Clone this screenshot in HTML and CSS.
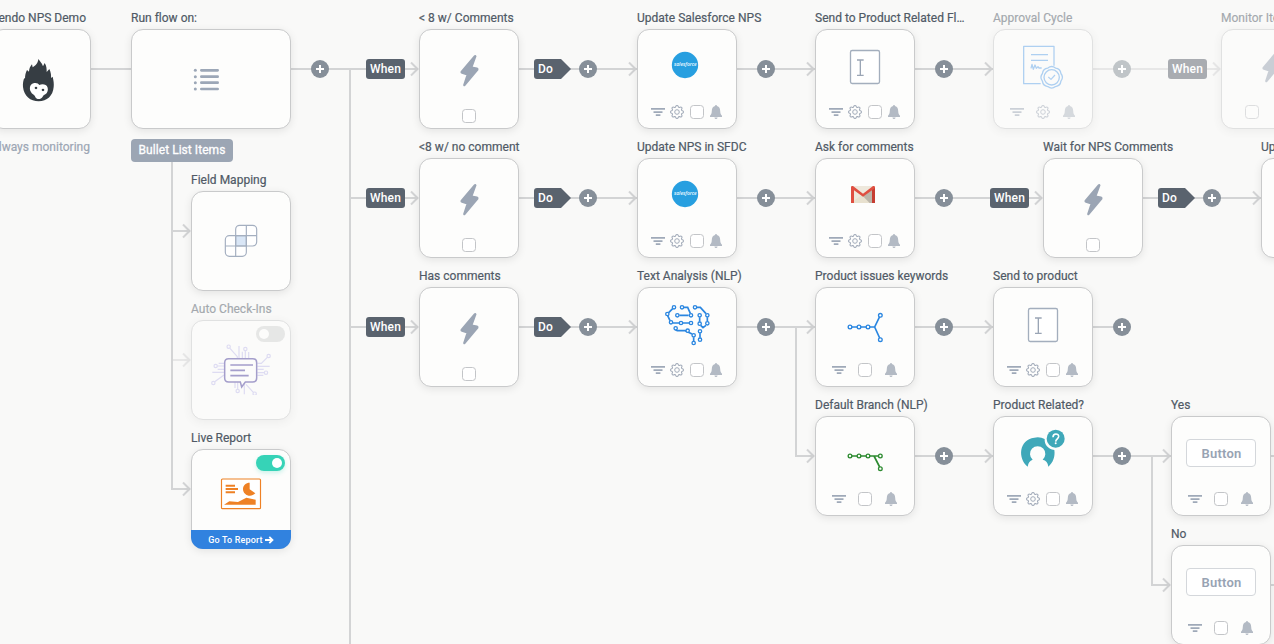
FILE: index.html
```html
<!DOCTYPE html>
<html lang="en">
<head>
<meta charset="utf-8">
<title>NPS flow</title>
<link rel="stylesheet" href="styles.css">
</head>
<body>
<svg class="defs" aria-hidden="true">
  <symbol id="filter" viewBox="0 0 14 14"><path d="M0 3.900h14M2.500 7.100h9M4.800 10.100h4.600" fill="none" stroke="#9fa9b8" stroke-width="1.600"/></symbol>
  <symbol id="gear" viewBox="0 0 14 14"><g fill="none" stroke="#a3acba"><path d="M5.700 1.600Q5.900.5 7 .5t1.300 1.100q.2 1 1.200.9 1.300-.9 2.100-.1t-.1 2.100q-.1 1 .9 1.200Q13.500 5.900 13.500 7t-1.100 1.300q-1 .2-.9 1.200.9 1.300.1 2.100t-2.100-.1q-1-.1-1.200.9Q8.100 13.500 7 13.500t-1.300-1.100q-.2-1-1.200-.9-1.300.9-2.100.1t.1-2.100q.1-1-.9-1.200Q.5 8.100.5 7t1.100-1.300q1-.2.9-1.200-.9-1.300-.1-2.100t2.100.1q1 .1 1.200-.9z" stroke-width="1.050"/><circle cx="7" cy="7" r="2.300"/></g></symbol>
  <symbol id="bell" viewBox="0 0 12 14"><path d="M5 1.100Q5 0 6 0t1 1.100C9.400 1.600 10.100 3.500 10.200 6c.1 2.300.5 3.400 1.800 4.700V12H0v-1.300C1.300 9.400 1.700 8.300 1.800 6 1.900 3.500 2.600 1.600 5 1.100zM4.400 12.500h3.200Q7.300 14 6 14t-1.600-1.500z" fill="#b3bac4"/></symbol>
  <symbol id="bolt" viewBox="240 90 294 222"><path d="M404 168 364 215q-1 3 2 4l16 5-10 31q0 2 2 1l39-47q1-3-2-4l-16-3 12-33q-1-3-3-1z" fill="#9ba5b4" stroke="#9ba5b4" stroke-width="5" stroke-linejoin="round"/></symbol>
  <symbol id="field" viewBox="618 90 294 222"><rect x="721.500" y="151.500" width="87" height="99" rx="5" fill="#fff" stroke="#a3aebd" stroke-width="4"/><path d="M741 180h20M741 226h20M751 180v46" fill="none" stroke="#9aa5b5" stroke-width="4"/></symbol>
</svg>

<main class="canvas">
  <svg class="wires" viewBox="0 0 1274 644">
    <path d="M90 69h41M291 69h75M350 69v575M350 198h16M350 327h16M172 161v328h18M172 231h18M405 69h13M405 198h13M405 327h13M519 69h118M519 198h118M519 327h118M737 69h78M737 198h78M737 327h78M915 69h78M915 198h75M1029 198h13M1143 198h118M915 327h78M1093 327h20M796 327v129h18M915 456h78M1093 456h78M1152 456v129h18M1271 456h3M1271 585h3"/>
    <path class="faded" d="M173 360h17M1093 69h75M1207 69h13"/>
    <g>
      <path d="M411 62.500l6.500 6.500-6.500 6.500M411 191.500l6.500 6.500-6.500 6.500M411 320.500l6.500 6.500-6.500 6.500M629 62.500l6.500 6.500-6.500 6.500M629 191.500l6.500 6.500-6.500 6.500M629 320.500l6.500 6.500-6.500 6.500M807 62.500l6.500 6.500-6.500 6.500M807 191.500l6.500 6.500-6.500 6.500M807 320.500l6.500 6.500-6.500 6.500M807 449.500l6.500 6.500-6.500 6.500M985 62.500l6.500 6.500-6.500 6.500M985 320.500l6.500 6.500-6.500 6.500M985 449.500l6.500 6.500-6.500 6.500M1035 191.500l6.500 6.500-6.500 6.500M1253 191.500l6.500 6.500-6.500 6.500M1163 449.500l6.500 6.500-6.500 6.500M1163 578.500l6.500 6.500-6.500 6.500M183 224.500l6.500 6.500-6.500 6.500M183 482.500l6.500 6.500-6.500 6.500"/>
      <path class="faded" d="M183 353.500l6.500 6.500-6.500 6.500M1213 62.500l6.500 6.500-6.500 6.500"/>
    </g>
  </svg>

  <section class="node start r1"><h2 class="right">Pendo NPS Demo</h2><div class="card">
    <svg class="art" viewBox="-24 90 294 222"><path d="M115 177c4 6 11 12 14 22l5-10c6 8 6 20 6 27l8-9c5 11 6 20 5 27l5-4c3 12 4 22 3 31-2 26-20 43-45 43s-44-16-47-43c-1-11 1-20 4-28l2 4c0-12 2-19 6-27l6 5c0-8 3-15 9-22l2 9c9-6 16-12 17-25z" fill="#363d43"/><path d="M93 276c-6-9-4-25 10-27 8-1 12 2 15 6 8-4 22-3 25 8 2 8-1 16-7 20-4 2-6 3-8 7-5 9-18 10-22 1-2-6-5-6-8-9q-3-2-5-6z" fill="#fff"/><ellipse cx="108" cy="264" rx="4" ry="3.500" fill="#363d43"/><ellipse cx="129" cy="270" rx="4" ry="3.500" fill="#363d43"/></svg>
  </div><p class="caption">Always monitoring</p></section>

  <section class="node run r1"><h2>Run flow on:</h2><div class="card">
    <svg class="art" viewBox="396 90 474 222"><path d="M604 211h49M604 230h49M604 248h49M604 267h49" stroke="#9ca7b7" stroke-width="8" stroke-linecap="round"/><g fill="#9ca7b7"><circle cx="586" cy="211" r="4.500"/><circle cx="586" cy="230" r="4.500"/><circle cx="586" cy="248" r="4.500"/><circle cx="586" cy="267" r="4.500"/></g></svg>
  </div><p class="chip">Bullet List Items</p></section>

  <section class="node sub s1"><h2>Field Mapping</h2><div class="card">
    <svg class="art" viewBox="216 81 294 222"><g fill="#fff" stroke="#a4afc0" stroke-width="3.500"><rect x="347" y="181" width="63" height="62" rx="12"/><rect x="316" y="212" width="63" height="62" rx="12"/><path d="M347 212h32v31h-32z" fill="#d9e6f6"/><path d="M379 181v62h-63M347 274v-62h63" fill="none"/></g></svg>
  </div></section>

  <section class="node sub s2 dim"><h2>Auto Check-Ins</h2><div class="card"><i class="toggle off"></i>
    <svg class="art" viewBox="216 78 294 222"><g fill="none" stroke="#c4c0ee" stroke-width="3.500"><path d="M330 160l22 25v10M357 153v40M367 170v20M376 167v25M386 171v20M412 205h12l18-18M412 214h37M412 223h19M412 233h22M412 241h18M313 205h-17M313 213h-21M313 223h-20M313 232h-36M312 240l-28 20M345 262v17M353 262v21M373 263v35M378 268l22 24"/><circle cx="326" cy="155" r="5"/><circle cx="376" cy="162" r="5"/><circle cx="446" cy="183" r="5"/><circle cx="287" cy="213" r="5"/><circle cx="438" cy="233" r="5"/><circle cx="280" cy="264" r="5"/><circle cx="353" cy="288" r="5"/><circle cx="404" cy="296" r="5"/></g><path d="M326 191h72q12 0 12 12v46q0 12-12 12h-22l-11 15-4-15h-35q-12 0-12-12v-46q0-12 12-12z" fill="#fff" stroke="#5145a0" stroke-width="4.500"/><path d="M331 210h68M331 226h44M331 242h55" stroke="#5145a0" stroke-width="5"/></svg>
  </div></section>

  <section class="node sub s3"><h2>Live Report</h2><div class="card report"><i class="toggle"></i>
    <svg class="art" viewBox="216 75 294 222"><rect x="304.500" y="162" width="117" height="89" rx="3" fill="#fff" stroke="#ee8125" stroke-width="3.500"/><g fill="#ee8125"><path d="M317 179h28v6h-28zM317 189h37v6h-37zM317 199h28v6h-28zM389 173v20l17 12c-14 15-37 5-37-13 0-11 9-19 20-19zM312 239l16-10 26 2 25-13 28 6v15z"/></g></svg>
    <a class="go">Go To Report <svg viewBox="0 0 9 8"><path d="M0 4h7M4.300.8 7.500 4 4.300 7.200" fill="none" stroke="#fff" stroke-width="1.800"/></svg></a>
  </div></section>

  <section class="node c1 r1"><h2>&lt; 8 w/ Comments</h2><div class="card"><svg class="art"><use href="#bolt"/></svg><footer class="one"><i class="box"></i></footer></div></section>
  <section class="node c1 r2"><h2>&lt;8 w/ no comment</h2><div class="card"><svg class="art"><use href="#bolt"/></svg><footer class="one"><i class="box"></i></footer></div></section>
  <section class="node c1 r3"><h2>Has comments</h2><div class="card"><svg class="art"><use href="#bolt"/></svg><footer class="one"><i class="box"></i></footer></div></section>

  <section class="node c2 r1"><h2>Update Salesforce NPS</h2><div class="card"><svg class="art" viewBox="84 90 294 222"><circle cx="225" cy="195" r="39.500" fill="#279fe0"/><text class="brand" x="192" y="198" textLength="68">salesforce</text></svg><footer><svg><use href="#filter"/></svg><svg><use href="#gear"/></svg><i class="box"></i><svg class="bell"><use href="#bell"/></svg></footer></div></section>
  <section class="node c2 r2"><h2>Update NPS in SFDC</h2><div class="card"><svg class="art" viewBox="84 90 294 222"><circle cx="225" cy="195" r="39.500" fill="#279fe0"/><text class="brand" x="192" y="198" textLength="68">salesforce</text></svg><footer><svg><use href="#filter"/></svg><svg><use href="#gear"/></svg><i class="box"></i><svg class="bell"><use href="#bell"/></svg></footer></div></section>
  <section class="node c2 r3"><h2>Text Analysis (NLP)</h2><div class="card">
    <svg class="art" viewBox="54 69 294 222"><g fill="none" stroke="#2a86e0" stroke-width="5"><path d="M158 131l-12 12M143 152l7 15M159 174h19M188 174h19M178 151h28M192 127h11l8 18M231 127h10l17 19M262 157v12M239 157v13M258 181l-9 7-7-7M167 195l5 2h24l20 10M221 217v11M240 205v13"/></g><g fill="#fff" stroke="#2a86e0" stroke-width="4"><circle cx="162" cy="127" r="5"/><circle cx="142" cy="147" r="5"/><circle cx="153" cy="172" r="5"/><circle cx="183" cy="174" r="5"/><circle cx="213" cy="174" r="5"/><circle cx="172" cy="151" r="5"/><circle cx="213" cy="151" r="5"/><circle cx="186" cy="127" r="5"/><circle cx="225" cy="127" r="5"/><circle cx="262" cy="151" r="5"/><circle cx="262" cy="175" r="5"/><circle cx="239" cy="151" r="5"/><circle cx="239" cy="176" r="5"/><circle cx="167" cy="190" r="5"/><circle cx="203" cy="197" r="5"/><circle cx="221" cy="211" r="5"/><circle cx="221" cy="234" r="5"/><circle cx="240" cy="199" r="5"/><circle cx="240" cy="224" r="5"/></g></svg>
  <footer><svg><use href="#filter"/></svg><svg><use href="#gear"/></svg><i class="box"></i><svg class="bell"><use href="#bell"/></svg></footer></div></section>

  <section class="node c3 r1"><h2>Send to Product Related Fl…</h2><div class="card"><svg class="art"><use href="#field"/></svg><footer><svg><use href="#filter"/></svg><svg><use href="#gear"/></svg><i class="box"></i><svg class="bell"><use href="#bell"/></svg></footer></div></section>
  <section class="node c3 r2"><h2>Ask for comments</h2><div class="card">
    <svg class="art" viewBox="48 72 294 222"><path d="M153 153h72v51h-72z" fill="#eee8dc"/><path d="M153 204l36-27 36 27z" fill="#e8e1cf"/><path d="M189 184l28-22v42h-8z" fill="#bcb6aa"/><path d="M153 157q0-5 6-4l30 23 30-23q6-1 6 4v47h-9v-38l-27 19-27-19v38h-9z" fill="#df4f41"/><path d="M216 166l9-7v45h-9z" fill="#c63d31"/></svg>
  <footer><svg><use href="#filter"/></svg><svg><use href="#gear"/></svg><i class="box"></i><svg class="bell"><use href="#bell"/></svg></footer></div></section>
  <section class="node c3 r3"><h2>Product issues keywords</h2><div class="card">
    <svg class="art" viewBox="588 69 294 222"><path d="M690 186h75M779 155l-15 31 15 33" fill="none" stroke="#2a86e0" stroke-width="5"/><g fill="#fff" stroke="#2a86e0" stroke-width="4"><circle cx="690" cy="186" r="5.500"/><circle cx="717" cy="186" r="5.500"/><circle cx="744" cy="186" r="5.500"/><circle cx="781" cy="151" r="5.500"/><circle cx="781" cy="224" r="5.500"/></g></svg>
  <footer class="wide"><svg><use href="#filter"/></svg><i class="box"></i><svg class="bell"><use href="#bell"/></svg></footer></div></section>
  <section class="node c3 r4"><h2>Default Branch (NLP)</h2><div class="card">
    <svg class="art" viewBox="108 81 294 222"><path d="M210 198h90M282 198l17 33" fill="none" stroke="#2e8b31" stroke-width="5"/><g fill="#fff" stroke="#2e8b31" stroke-width="4"><circle cx="210" cy="198" r="5.500"/><circle cx="237" cy="198" r="5.500"/><circle cx="264" cy="198" r="5.500"/><circle cx="301" cy="198" r="5.500"/><circle cx="301" cy="236" r="5.500"/></g></svg>
  <footer class="wide"><svg><use href="#filter"/></svg><i class="box"></i><svg class="bell"><use href="#bell"/></svg></footer></div></section>

  <section class="node c4 r1 dim"><h2>Approval Cycle</h2><div class="card">
    <svg class="art" viewBox="192 90 294 222"><g fill="none" stroke="#66a9ec" stroke-width="3.800" stroke-linejoin="round"><path d="M332 251h-51V139h91v58M303 164h51M303 181h51M303 205l3-12 4 15 5-13 4 10 5-5 3 4h8"/><path d="M392.700 220.500Q402 232 392.700 243.500 391 258 376.500 259.700 365 269 353.500 259.700 339 258 337.300 243.500 328 232 337.300 220.500 339 206 353.500 204.300 365 195 376.500 204.300 391 206 392.700 220.500z" stroke-width="4"/><circle cx="365" cy="232" r="23" stroke-width="4"/><path d="M355 231l8 7 12-13" stroke-width="3.500"/></g></svg>
  <footer class="wide"><svg><use href="#filter"/></svg><svg><use href="#gear"/></svg><svg class="bell"><use href="#bell"/></svg></footer></div></section>
  <section class="node c4 r3"><h2>Send to product</h2><div class="card"><svg class="art"><use href="#field"/></svg><footer><svg><use href="#filter"/></svg><svg><use href="#gear"/></svg><i class="box"></i><svg class="bell"><use href="#bell"/></svg></footer></div></section>
  <section class="node c4 r4"><h2>Product Related?</h2><div class="card">
    <svg class="art" viewBox="642 81 294 222"><path d="M743 230C713 205 716 150 763 143q18-3 31 4c-1 17 10 30 29 33 3 20-4 38-18 50q-2-18-17-21a23 23 0 1 0-30 0q-13 4-15 21z" fill="#3fa8b9"/><circle cx="827" cy="146" r="27" fill="#3fa8b9"/><path d="M819 142c0-14 18-12 17-2-1 7-8 6-9 15" fill="none" stroke="#fff" stroke-width="4.800"/><circle cx="827" cy="160" r="3" fill="#fff"/></svg>
  <footer><svg><use href="#filter"/></svg><svg><use href="#gear"/></svg><i class="box"></i><svg class="bell"><use href="#bell"/></svg></footer></div></section>

  <section class="node wait r2"><h2>Wait for NPS Comments</h2><div class="card"><svg class="art"><use href="#bolt"/></svg><footer class="one"><i class="box"></i></footer></div></section>
  <section class="node c5 r4"><h2>Yes</h2><div class="card"><span class="button">Button</span><footer class="wide"><svg><use href="#filter"/></svg><i class="box"></i><svg class="bell"><use href="#bell"/></svg></footer></div></section>
  <section class="node c5 r5"><h2>No</h2><div class="card"><span class="button">Button</span><footer class="wide"><svg><use href="#filter"/></svg><i class="box"></i><svg class="bell"><use href="#bell"/></svg></footer></div></section>
  <section class="node monitor r1 dim"><h2>Monitor Item</h2><div class="card"><svg class="art"><use href="#bolt" y="-4"/></svg><footer class="two"><i class="box"></i></footer></div></section>
  <section class="node last r2"><h2>Update</h2><div class="card"></div></section>

  <span class="tag when w1 t1">When</span><span class="tag when w1 t2">When</span><span class="tag when w1 t3">When</span>
  <span class="tag when w2 t2">When</span><span class="tag when w3 t1 pale">When</span>
  <span class="tag do d1 t1">Do</span><span class="tag do d1 t2">Do</span><span class="tag do d1 t3">Do</span><span class="tag do d2 t2">Do</span>

  <i class="plus p0 t1"></i>
  <i class="plus p1 t1"></i><i class="plus p1 t2"></i><i class="plus p1 t3"></i>
  <i class="plus p2 t1"></i><i class="plus p2 t2"></i><i class="plus p2 t3"></i>
  <i class="plus p3 t1"></i><i class="plus p3 t2"></i><i class="plus p3 t3"></i><i class="plus p3 t4"></i>
  <i class="plus p4 t1 pale"></i><i class="plus p4 t3"></i><i class="plus p4 t4"></i>
  <i class="plus p5 t2"></i>
</main>
</body>
</html>
```
FILE: styles.css
```css
* { box-sizing: border-box; }
body { margin: 0; background: #f9f9f8; font-family: Roboto, "Open Sans", sans-serif; color: #505a66; }
h2, p { margin: 0; }
.defs { position: absolute; width: 0; height: 0; }

/* free canvas that holds the flow diagram */
.canvas { position: relative; width: 1274px; height: 644px; overflow: hidden; }
.wires { position: absolute; left: 0; top: 0; width: 1274px; height: 644px; }
.wires path { fill: none; stroke: #d3d4d5; stroke-width: 2; }
.wires .faded { stroke: #e7e7e7; }

.node { position: absolute; width: 100px; }
.node h2 { height: 20px; font-size: 12px; line-height: 19px; font-weight: 400; letter-spacing: .01px; -webkit-text-stroke: .2px currentColor; white-space: nowrap; }
.node h2.right { display: flex; justify-content: flex-end; width: 95px; }
.card { position: relative; height: 100px; border: 1px solid #c9cacb; border-radius: 12px; background: #fdfdfc; box-shadow: 0 2px 8px rgba(0, 0, 0, .09); }
.art { display: block; width: 100%; height: 74px; }
.brand { font: italic 600 15px "Open Sans", sans-serif; fill: #e8f6ff; }
.dim > * { opacity: .5; }

footer { display: flex; align-items: center; height: 14px; margin: 1px 13px 0; gap: 5px; }
footer svg, .box { display: block; flex: none; width: 14px; height: 14px; }
footer svg.bell { width: 12px; }
.box { border: 1px solid #c3c5c8; border-radius: 3.5px; background: #fff; }
footer .box + .bell { margin-left: 1px; }
footer svg + .box { margin-left: 1px; }
footer.wide { margin: 1px 17px 0 16px; gap: 0; justify-content: space-between; }
footer.wide > :nth-child(2) { margin: 0 1px 0 0; }
footer.wide > .bell { margin: 0; }
footer.one { justify-content: center; margin-top: 5px; }
footer.two { margin-left: 23px; }

.button { display: flex; align-items: center; justify-content: center; width: 70px; height: 28px; margin: 22px 0 25px 14px; padding-left: 1px; border: 1px solid #d4d7db; border-radius: 4px; background: #fff; color: #98a3b3; font-size: 13px; font-weight: 600; letter-spacing: .2px; }
.toggle { position: absolute; right: 5px; top: 5px; width: 29px; height: 16px; border-radius: 8px; background: #36d3b7; box-shadow: 0 2px 4px rgba(54, 211, 183, .25); }
.toggle::after { content: ""; position: absolute; right: 3px; top: 3px; width: 10px; height: 10px; border-radius: 50%; background: #fff; }
.toggle.off { background: #d5d6d5; box-shadow: none; }
.toggle.off::after { right: 16px; }
.report { display: flex; flex-direction: column; justify-content: space-between; }
.go { display: flex; align-items: center; justify-content: center; gap: 2px; height: 19px; margin: 0 -1px -1px; border-radius: 0 0 12px 12px; background: #3182df; color: #fff; font-size: 9px; font-weight: 500; letter-spacing: .15px; }
.go svg { width: 9px; height: 8px; }
.caption { display: flex; justify-content: flex-end; width: 99px; margin-top: 10px; font-size: 12px; line-height: 17px; color: #9ca6b4; letter-spacing: .01px; -webkit-text-stroke: .2px currentColor; white-space: nowrap; }
.chip { width: 102px; height: 23px; margin-top: 10px; border-radius: 4px; background: #9ca6b4; color: #fff; font-size: 12px; line-height: 22px; letter-spacing: .05px; -webkit-text-stroke: .3px currentColor; text-align: center; white-space: nowrap; }

.tag { position: absolute; height: 20px; border-radius: 3px; background: #5a636e; color: #fff; font-size: 12px; line-height: 20px; font-weight: 500; letter-spacing: .2px; }
.when { width: 39px; text-align: center; }
.do { width: 37px; padding-left: 4px; clip-path: polygon(0 0, 27px 0, 100% 50%, 27px 100%, 0 100%); }
.plus { position: absolute; width: 18px; height: 18px; margin-top: 1px; border-radius: 50%; background: linear-gradient(#fff, #fff) center / 8px 2px no-repeat, linear-gradient(#fff, #fff) center / 2px 8px no-repeat, #868f99; }
.tag.pale { background: #a9acb1; }
.plus.pale { background-color: #c0c5c8; }

.start { left: -9px; }
.run { left: 131px; width: 160px; }
.sub { left: 191px; }
.c1 { left: 419px; }
.c2 { left: 637px; }
.c3 { left: 815px; }
.c4 { left: 993px; }
.c5 { left: 1171px; }
.wait { left: 1043px; }
.monitor { left: 1221px; }
.last { left: 1261px; }
.r1 { top: 9px; }
.r2 { top: 138px; }
.r3 { top: 267px; }
.r4 { top: 396px; }
.r5 { top: 525px; }
.s1 { top: 171px; }
.s2 { top: 300px; }
.s3 { top: 429px; }
.t1 { top: 59px; }
.t2 { top: 188px; }
.t3 { top: 317px; }
.t4 { top: 446px; }
.w1 { left: 366px; }
.w2 { left: 990px; }
.w3 { left: 1168px; }
.d1 { left: 534px; }
.d2 { left: 1158px; }
.p0 { left: 311px; }
.p1 { left: 579px; }
.p2 { left: 757px; }
.p3 { left: 935px; }
.p4 { left: 1113px; }
.p5 { left: 1203px; }
```
